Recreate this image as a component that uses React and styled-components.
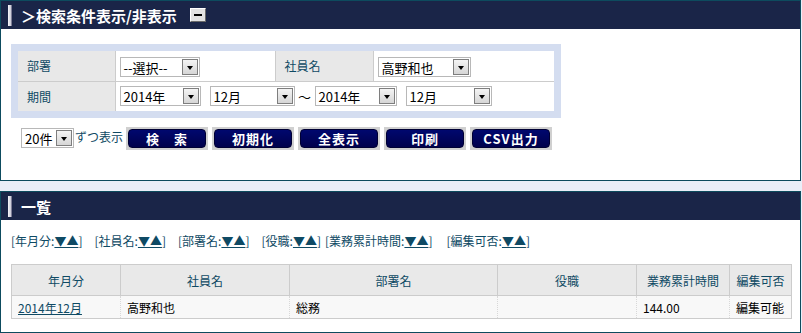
import React from 'react';
import styled, { createGlobalStyle } from 'styled-components';

const GlobalStyle = createGlobalStyle`
  html, body { margin: 0; padding: 0; background: #eaeef8; }
  body { font-family: "Noto Sans CJK JP", "Noto Sans", sans-serif; }
`;

const Page = styled.div`
  width: 801px;
  display: flex;
  flex-direction: column;
  gap: 10px;
`;

const Panel = styled.section`
  box-sizing: border-box;
  width: 801px;
  height: ${p => p.$h}px;
  border: 1px solid #0d4b5e;
  background: #fff;
`;

const Header = styled.div`
  height: 28px;
  background: #1a2548;
  display: flex;
  align-items: center;
  padding-left: 7px;
  gap: 9px;
`;

const Marker = styled.span`
  box-sizing: border-box;
  width: 4px;
  height: 21px;
  background: linear-gradient(90deg, #f6f6fa, #c9c9d6);
  border-right: 1px solid #7d7d96;
`;

const Title = styled.h2`
  margin: 0;
  font-size: 15px;
  font-weight: bold;
  color: #fff;
  line-height: 1;
`;

const Toggle = styled.button`
  box-sizing: border-box;
  width: 16px;
  height: 14px;
  margin-left: 4px;
  padding: 0;
  border: 1px solid;
  border-color: #fff #6a6a6a #6a6a6a #fff;
  background: #e2e2e2;
  display: flex;
  align-items: center;
  justify-content: center;
  &::before {
    content: '';
    width: 8px;
    height: 2px;
    background: #000;
  }
`;

const SearchFrame = styled.div`
  box-sizing: border-box;
  width: 550px;
  margin: 15px 0 0 10px;
  padding: 7px;
  background: #d4ddf0;
`;

const FormTable = styled.table`
  width: 536px;
  border-collapse: collapse;
  background: #fff;
`;

const FormRow = styled.tr`
  height: 30px;
  & + & { border-top: 1px solid #cccccc; }
`;

const Label = styled.th`
  width: ${p => p.$w}px;
  box-sizing: border-box;
  padding: 0 0 0 9px;
  text-align: left;
  font-weight: normal;
  font-size: 12px;
  color: #0f4a64;
  background: #e8e8e8;
  border-right: 1px solid #cccccc;
`;

const Field = styled.td`
  width: ${p => (p.$w ? `${p.$w}px` : 'auto')};
  box-sizing: border-box;
  padding: 0 0 0 4px;
  border-right: 1px solid #cccccc;
  &:last-child { border-right: none; }
`;

const Inline = styled.div`
  display: flex;
  align-items: center;
  gap: ${p => p.$gap || 0}px;
`;

const SelectBox = styled.div`
  box-sizing: border-box;
  display: inline-flex;
  align-items: center;
  justify-content: space-between;
  width: ${p => p.$w}px;
  height: 20px;
  padding: 1px 1px 1px 3px;
  border: 1px solid #b8b8b8;
  background: #fff;
  font-size: 13px;
  color: #000;
  line-height: 1;
  white-space: nowrap;
`;

const Arrow = styled.span`
  box-sizing: border-box;
  flex: none;
  width: 16px;
  height: 16px;
  border: 1px solid #7e7e7e;
  background: linear-gradient(#f4f4f4, #d6d6d6);
  display: flex;
  align-items: center;
  justify-content: center;
  &::before {
    content: '';
    margin-top: 2px;
    border-left: 3.5px solid transparent;
    border-right: 3.5px solid transparent;
    border-top: 4px solid #000;
  }
`;

const Select = ({ w, children }) => (
  <SelectBox $w={w}>
    <span>{children}</span>
    <Arrow />
  </SelectBox>
);

const Tilde = styled.span`
  width: 16px;
  text-align: center;
  font-size: 13px;
  color: #000;
`;

const Toolbar = styled.div`
  display: flex;
  align-items: flex-start;
  margin: 10px 0 0 20px;
`;

const PerPage = styled.span`
  font-size: 12px;
  color: #0f4a64;
  line-height: 16px;
  margin: 1px 3px 0 1px;
`;

const Buttons = styled.div`
  display: flex;
  gap: 4px;
  margin-top: -1px;
`;

const Btn = styled.button`
  box-sizing: border-box;
  width: 82px;
  height: 23px;
  padding: 0;
  border: 2px solid #d0d0d0;
  background: #d0d0d0;
  cursor: pointer;
  font-family: inherit;
  & > span {
    box-sizing: border-box;
    display: flex;
    align-items: center;
    justify-content: center;
    height: 100%;
    border-radius: 4px;
    border: 1px solid #000034;
    background: linear-gradient(#00086e, #00004c);
    color: #fff;
    font-weight: bold;
    font-size: 13px;
    letter-spacing: 1px;
  }
`;

const SortBar = styled.div`
  display: flex;
  margin: 13px 0 0 10px;
  font-size: 12px;
  line-height: 16px;
  color: #0f4a64;
  white-space: nowrap;
`;

const SortItem = styled.span`
  margin-right: ${p => p.$after}px;
`;

const SortLink = styled.a`
  color: #0f4a64;
  text-decoration: underline;
`;

const ListTable = styled.table`
  width: 780px;
  margin: 15px 0 0 10px;
  border-collapse: collapse;
  border: 1px solid #cccccc;
  table-layout: fixed;
`;

const Th = styled.th`
  height: 30px;
  padding: 0;
  background: #e9e9e9;
  border: 1px solid #cccccc;
  color: #0f4a64;
  font-weight: normal;
  font-size: 12px;
`;

const Td = styled.td`
  height: 22px;
  padding: 0 0 0 6px;
  background: #f8f8f8;
  border-left: 1px dotted #d8d8d8;
  border-bottom: 1px solid #cccccc;
  font-size: 12px;
  color: #000;
  white-space: nowrap;
  &:first-child { border-left: none; }
`;

const DataLink = styled.a`
  color: #0f4a64;
  text-decoration: underline;
  font-size: 12px;
`;

const sorts = [
  ['年月分', 12],
  ['社員名', 12],
  ['部署名', 12],
  ['役職', 4],
  ['業務累計時間', 14],
  ['編集可否', 0],
];

const cols = [
  ['年月分', 109],
  ['社員名', 169],
  ['部署名', 208],
  ['役職', 139],
  ['業務累計時間', 93],
  ['編集可否', 62],
];

export default function App() {
  return (
    <>
      <GlobalStyle />
      <Page>
        <Panel $h={181}>
          <Header>
            <Marker />
            <Title>＞検索条件表示/非表示</Title>
            <Toggle aria-label="閉じる" />
          </Header>
          <SearchFrame>
            <FormTable>
              <tbody>
                <FormRow>
                  <Label $w={97}>部署</Label>
                  <Field $w={160}>
                    <Select w={80}>--選択--</Select>
                  </Field>
                  <Label $w={98}>社員名</Label>
                  <Field>
                    <Select w={93}>高野和也</Select>
                  </Field>
                </FormRow>
                <FormRow>
                  <Label $w={97}>期間</Label>
                  <Field colSpan={3}>
                    <Inline $gap={2}>
                      <Inline $gap={9}>
                        <Select w={81}>2014年</Select>
                        <Select w={85}>12月</Select>
                      </Inline>
                      <Tilde>〜</Tilde>
                      <Inline $gap={9}>
                        <Select w={82}>2014年</Select>
                        <Select w={86}>12月</Select>
                      </Inline>
                    </Inline>
                  </Field>
                </FormRow>
              </tbody>
            </FormTable>
          </SearchFrame>
          <Toolbar>
            <Select w={53}>20件</Select>
            <PerPage>ずつ表示</PerPage>
            <Buttons>
              <Btn><span>検　索</span></Btn>
              <Btn><span>初期化</span></Btn>
              <Btn><span>全表示</span></Btn>
              <Btn><span>印刷</span></Btn>
              <Btn><span>CSV出力</span></Btn>
            </Buttons>
          </Toolbar>
        </Panel>

        <Panel $h={142}>
          <Header>
            <Marker />
            <Title>一覧</Title>
          </Header>
          <SortBar>
            {sorts.map(([name, after]) => (
              <SortItem key={name} $after={after}>
                [{name}:<SortLink href="#">▼▲</SortLink>]
              </SortItem>
            ))}
          </SortBar>
          <ListTable>
            <colgroup>
              {cols.map(([n, w]) => (
                <col key={n} style={{ width: w }} />
              ))}
            </colgroup>
            <thead>
              <tr>
                {cols.map(([n]) => (
                  <Th key={n}>{n}</Th>
                ))}
              </tr>
            </thead>
            <tbody>
              <tr>
                <Td><DataLink href="#">2014年12月</DataLink></Td>
                <Td>高野和也</Td>
                <Td>総務</Td>
                <Td></Td>
                <Td>144.00</Td>
                <Td>編集可能</Td>
              </tr>
            </tbody>
          </ListTable>
        </Panel>
      </Page>
    </>
  );
}
